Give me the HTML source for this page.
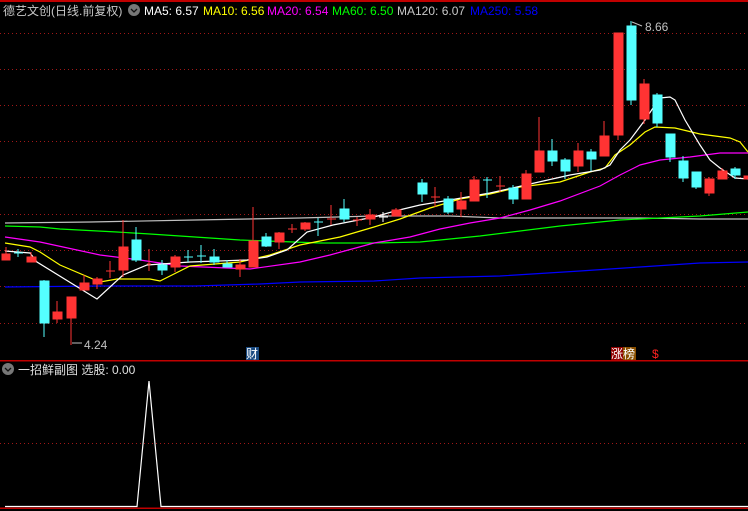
<!DOCTYPE html>
<html><head><meta charset="utf-8"><style>
html,body{margin:0;padding:0;background:#000;width:748px;height:511px;overflow:hidden}
svg{display:block}
text{font-family:"Liberation Sans","Noto Sans CJK SC",sans-serif;font-size:12px}
</style></head><body>
<svg width="748" height="511" viewBox="0 0 748 511" xmlns="http://www.w3.org/2000/svg">
<rect width="748" height="511" fill="#000"/>
<rect x="0" y="0" width="748" height="2" fill="#c00000"/>
<g stroke="#a01818" stroke-width="1" stroke-dasharray="1 3">
<line x1="0" y1="33.5" x2="748" y2="33.5"/><line x1="0" y1="69.5" x2="748" y2="69.5"/>
<line x1="0" y1="105.5" x2="748" y2="105.5"/><line x1="0" y1="141.5" x2="748" y2="141.5"/>
<line x1="0" y1="177.5" x2="748" y2="177.5"/><line x1="0" y1="214.5" x2="748" y2="214.5"/>
<line x1="0" y1="250.5" x2="748" y2="250.5"/><line x1="0" y1="286.5" x2="748" y2="286.5"/>
<line x1="0" y1="323.5" x2="748" y2="323.5"/><line x1="0" y1="443.5" x2="748" y2="443.5"/>
</g>
<rect x="0" y="360" width="748" height="1.5" fill="#c00000"/>
<rect x="0" y="507.5" width="748" height="1.5" fill="#c00000"/>

<g fill="none" stroke-width="1.2">
<polyline stroke="#0000ff" points="5,287 100,286 195,286 260,284 300,282 374,281 420,278 500,276 580,271 640,267 700,263 748,262"/>
<polyline stroke="#c0c0c0" points="5,223 90,222 195,220 300,218 374,216 450,216 500,218 560,218 640,218 700,219 748,219"/>
<polyline stroke="#00ff00" points="5,226 40,227 60,229 117,232 150,234 240,240 320,243 374,243 420,242 480,236 560,226 620,220 660,218 700,216 748,212"/>
<polyline stroke="#ff00ff" points="5,237 40,242 100,255 140,260 180,266 250,269 300,262 330,255 374,243 410,237 440,229 470,223 500,218 530,210 560,201 600,186 620,175 640,165 660,160 690,157 720,153 748,153"/>
<polyline stroke="#ffff00" points="5,243 30,247 40,252 60,265 100,282 117,279 150,279 160,281 170,276 190,266 240,262 270,255 300,245 340,237 374,227 400,219 430,208 460,199 490,194 520,187 560,182 590,172 605,168 615,155 630,145 645,132 655,127 675,128 700,134 730,138 740,142 748,152"/>
<polyline stroke="#ffffff" points="5,251 30,253 37,262 97,299 123,275 147,265 190,262 247,260 267,257 287,250 307,232 333,225 374,217 395,211 420,205 450,200 490,193 530,184 570,175 600,170 610,165 620,150 630,140 645,120 655,105 660,98 670,97 675,100 685,120 700,145 710,160 720,168 735,178 748,179"/>
</g>

<g fill="#ff3333" stroke="#ff3333" stroke-width="1">
<line x1="6" y1="247" x2="6" y2="260"/><rect x="2" y="254" width="8" height="6"/>
<line x1="31" y1="252" x2="31" y2="262"/><rect x="27" y="257" width="9" height="5"/>
<line x1="57" y1="301" x2="57" y2="323"/><rect x="53" y="312" width="9" height="7"/>
<line x1="71" y1="297" x2="71" y2="345"/><rect x="67" y="297" width="9" height="21"/>
<line x1="84" y1="275" x2="84" y2="290"/><rect x="80" y="283" width="9" height="7"/>
<line x1="97" y1="277" x2="97" y2="289"/><rect x="93" y="279" width="9" height="5"/>
<line x1="110" y1="261" x2="110" y2="278"/><line x1="106" y1="271" x2="115" y2="271"/>
<line x1="123" y1="220" x2="123" y2="277"/><rect x="119" y="247" width="9" height="23"/>
<line x1="149" y1="249" x2="149" y2="271"/><line x1="147" y1="264" x2="151" y2="264"/>
<line x1="175" y1="255" x2="175" y2="272"/><rect x="171" y="257" width="9" height="10"/>
<line x1="240" y1="259" x2="240" y2="277"/><rect x="236" y="265" width="9" height="4"/>
<line x1="253" y1="207" x2="253" y2="267"/><rect x="249" y="241" width="9" height="26"/>
<line x1="279" y1="232" x2="279" y2="249"/><rect x="275" y="233" width="9" height="9"/>
<line x1="292" y1="224" x2="292" y2="233"/><line x1="288" y1="229" x2="297" y2="229"/>
<line x1="305" y1="222" x2="305" y2="231"/><rect x="301" y="223" width="9" height="6"/>
<line x1="331" y1="205" x2="331" y2="225"/><line x1="327" y1="219" x2="336" y2="219"/>
<line x1="357" y1="217" x2="357" y2="226"/><line x1="353" y1="220" x2="362" y2="220"/>
<line x1="370" y1="209" x2="370" y2="225"/><rect x="366" y="215" width="9" height="4"/>
<line x1="396" y1="208" x2="396" y2="216"/><rect x="392" y="210" width="9" height="6"/>
<line x1="435" y1="187" x2="435" y2="207"/><line x1="431" y1="197" x2="440" y2="197"/>
<line x1="461" y1="192" x2="461" y2="217"/><rect x="457" y="201" width="9" height="8"/>
<line x1="474" y1="176" x2="474" y2="201"/><rect x="470" y="180" width="9" height="21"/>
<line x1="500" y1="176" x2="500" y2="192"/><line x1="496" y1="186" x2="505" y2="186"/>
<line x1="526" y1="170" x2="526" y2="199"/><rect x="522" y="174" width="9" height="25"/>
<line x1="539" y1="117" x2="539" y2="172"/><rect x="535" y="151" width="9" height="21"/>
<line x1="578" y1="143" x2="578" y2="172"/><rect x="574" y="151" width="9" height="15"/>
<line x1="604" y1="121" x2="604" y2="156"/><rect x="600" y="136" width="9" height="20"/>
<line x1="618" y1="33" x2="618" y2="140"/><rect x="614" y="33" width="9" height="102"/>
<line x1="644" y1="79" x2="644" y2="124"/><rect x="640" y="84" width="9" height="35"/>
<line x1="709" y1="177" x2="709" y2="196"/><rect x="705" y="179" width="9" height="14"/>
<line x1="722" y1="168" x2="722" y2="179"/><rect x="718" y="171" width="9" height="8"/>
<rect x="744" y="176" width="6" height="3"/>
</g>
<g fill="#54ffff" stroke="#54ffff" stroke-width="1">
<line x1="18" y1="249" x2="18" y2="257"/><line x1="14" y1="253" x2="23" y2="253"/>
<line x1="44" y1="280" x2="44" y2="337"/><rect x="40" y="281" width="9" height="42"/>
<line x1="136" y1="227" x2="136" y2="262"/><rect x="132" y="240" width="9" height="20"/>
<line x1="162" y1="260" x2="162" y2="275"/><rect x="158" y="265" width="9" height="5"/>
<line x1="188" y1="250" x2="188" y2="262"/><line x1="184" y1="257" x2="193" y2="257"/>
<line x1="201" y1="245" x2="201" y2="263"/><line x1="197" y1="256" x2="206" y2="256"/>
<line x1="214" y1="249" x2="214" y2="265"/><rect x="210" y="257" width="9" height="5"/>
<line x1="227" y1="260" x2="227" y2="267"/><rect x="223" y="264" width="9" height="3"/>
<line x1="266" y1="233" x2="266" y2="247"/><rect x="262" y="237" width="9" height="9"/>
<line x1="318" y1="218" x2="318" y2="236"/><line x1="314" y1="222" x2="323" y2="222"/>
<line x1="344" y1="199" x2="344" y2="222"/><rect x="340" y="209" width="9" height="10"/>
<line x1="422" y1="179" x2="422" y2="202"/><rect x="418" y="183" width="9" height="11"/>
<line x1="448" y1="196" x2="448" y2="214"/><rect x="444" y="199" width="9" height="13"/>
<line x1="487" y1="177" x2="487" y2="198"/><line x1="483" y1="180" x2="492" y2="180"/>
<line x1="513" y1="185" x2="513" y2="204"/><rect x="509" y="188" width="9" height="11"/>
<line x1="552" y1="139" x2="552" y2="166"/><rect x="548" y="151" width="9" height="10"/>
<line x1="565" y1="158" x2="565" y2="179"/><rect x="561" y="160" width="9" height="11"/>
<line x1="591" y1="149" x2="591" y2="171"/><rect x="587" y="152" width="9" height="7"/>
<line x1="631" y1="21" x2="631" y2="105"/><rect x="627" y="26" width="9" height="74"/>
<line x1="657" y1="93" x2="657" y2="127"/><rect x="653" y="95" width="9" height="28"/>
<line x1="670" y1="134" x2="670" y2="162"/><rect x="666" y="134" width="9" height="23"/>
<line x1="683" y1="156" x2="683" y2="182"/><rect x="679" y="161" width="9" height="17"/>
<line x1="696" y1="172" x2="696" y2="189"/><rect x="692" y="172" width="9" height="15"/>
<line x1="735" y1="167" x2="735" y2="179"/><rect x="731" y="169" width="9" height="6"/>
</g>
<g stroke="#ffffff"><line x1="383" y1="212" x2="383" y2="222"/><line x1="379" y1="217" x2="388" y2="217"/></g>

<g fill="#c0c0c0" stroke="none">
<line x1="72" y1="343" x2="82" y2="343" stroke="#c0c0c0"/>
<text x="84" y="349" font-size="11">4.24</text>
<line x1="632" y1="22" x2="642" y2="26" stroke="#c0c0c0"/>
<text x="645" y="31" font-size="11">8.66</text>
</g>
<rect x="246" y="347" width="13" height="13" fill="#1a4a80"/>
<text x="246" y="358" fill="#fff" font-size="11">财</text>
<rect x="611" y="347" width="12" height="13" fill="#900000"/>
<rect x="623" y="347" width="13" height="13" fill="#8a5000"/>
<text x="611" y="358" fill="#fff" font-size="11">涨榜</text>
<text x="652" y="358" fill="#ff2020" font-size="11">$</text>

<text x="3" y="15" fill="#c8c8c8">德艺文创(日线.前复权)</text>
<circle cx="134" cy="10" r="6" fill="#777"/>
<path d="M131 9 L134 12 L137 9" stroke="#111" stroke-width="1.3" fill="none"/>
<text x="144" y="15" fill="#ffffff">MA5: 6.57</text>
<text x="203" y="15" fill="#ffff00">MA10: 6.56</text>
<text x="267" y="15" fill="#ff00ff">MA20: 6.54</text>
<text x="332" y="15" fill="#00ff00">MA60: 6.50</text>
<text x="397" y="15" fill="#c8c8c8">MA120: 6.07</text>
<text x="470" y="15" fill="#0000ff">MA250: 5.58</text>

<circle cx="8" cy="369" r="6" fill="#777"/>
<path d="M5 368 L8 371 L11 368" stroke="#111" stroke-width="1.3" fill="none"/>
<text x="18" y="374" fill="#e0e0e0">一招鲜副图  选股: 0.00</text>
<polyline fill="none" stroke="#fff" stroke-width="1.2" points="5,506.5 137,506.5 149,381 161,506.5 748,506.5"/>
</svg>
</body></html>
